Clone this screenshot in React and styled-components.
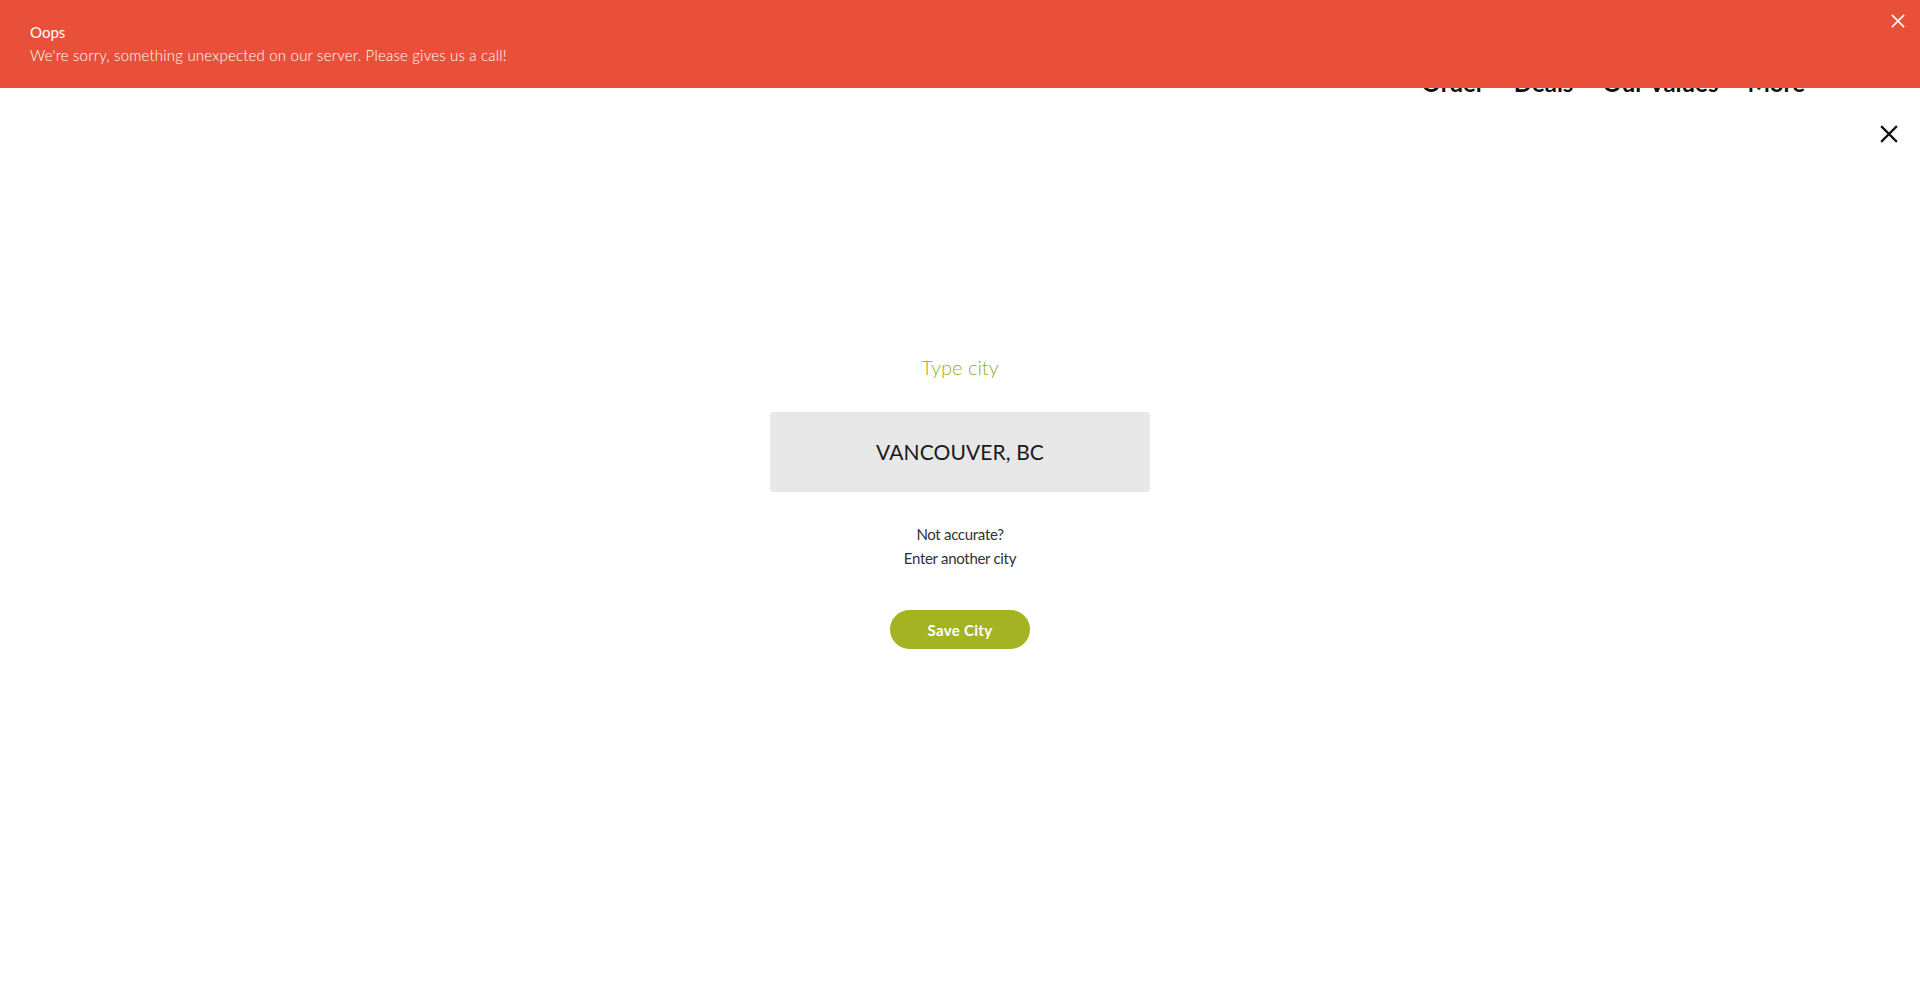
import React from "react";
import styled, { createGlobalStyle } from "styled-components";

const GlobalStyle = createGlobalStyle`
  html, body {
    margin: 0;
    padding: 0;
    background: #ffffff;
    font-family: Lato, "Open Sans", "Liberation Sans", sans-serif;
    color: #222;
  }
  * { box-sizing: border-box; }
`;

const Page = styled.div`
  position: relative;
  min-height: 100vh;
  background: #fff;
`;

const Banner = styled.div`
  position: fixed;
  top: 0;
  left: 0;
  right: 0;
  height: 88px;
  background: #e8503a;
  color: #fff;
  padding: 21px 30px 0;
  z-index: 10;
`;

const BannerTitle = styled.div`
  font-size: 15px;
  line-height: 22px;
  font-weight: 400;
`;

const BannerText = styled.div`
  font-size: 15px;
  line-height: 24px;
  font-weight: 300;
  letter-spacing: 0.2px;
`;

const BannerClose = styled.button`
  position: absolute;
  top: 12px;
  right: 13px;
  width: 18px;
  height: 18px;
  padding: 0;
  border: 0;
  background: transparent;
  display: flex;
  align-items: center;
  justify-content: center;
  cursor: pointer;
`;

const Header = styled.header`
  display: flex;
  flex-direction: column;
`;

const Nav = styled.nav`
  display: flex;
  justify-content: flex-end;
  gap: 29px;
  padding: 68px 115px 0 0;
`;

const NavItem = styled.a`
  font-size: 24px;
  line-height: 30px;
  font-weight: 700;
  color: #111;
  text-decoration: none;
`;

const CloseRow = styled.div`
  display: flex;
  justify-content: flex-end;
  padding-right: 19px;
  margin-top: 24px;
`;

const CloseButton = styled.button`
  width: 24px;
  height: 24px;
  padding: 0;
  border: 0;
  background: transparent;
  display: flex;
  align-items: center;
  justify-content: center;
  cursor: pointer;
`;

const Main = styled.main`
  display: flex;
  flex-direction: column;
  align-items: center;
  padding-top: 207px;
`;

const Title = styled.h2`
  margin: 0;
  font-size: 20px;
  line-height: 28px;
  font-weight: 300;
  color: #93b01a;
`;

const CityBox = styled.div`
  margin-top: 31px;
  width: 380px;
  height: 80px;
  background: #e7e7e7;
  border-radius: 4px;
  display: flex;
  align-items: center;
  justify-content: center;
  font-size: 21px;
  font-weight: 400;
  letter-spacing: 0.1px;
  color: #1a1a1a;
  padding-bottom: 2px;
`;

const Hint = styled.p`
  margin: 30px 0 0;
  text-align: center;
  font-size: 15px;
  line-height: 24px;
  color: #333;
  letter-spacing: -0.3px;
`;

const SaveButton = styled.button`
  margin-top: 40px;
  width: 140px;
  height: 39px;
  border: 0;
  border-radius: 20px;
  background: #a3b322;
  color: #fff;
  font-family: inherit;
  font-size: 15px;
  font-weight: 700;
  letter-spacing: 0.3px;
  cursor: pointer;
`;

const XIcon = ({ size, color, stroke }) => (
  <svg width={size} height={size} viewBox="0 0 16 16" fill="none">
    <path d="M1 1L15 15M15 1L1 15" stroke={color} strokeWidth={stroke} />
  </svg>
);

export default function App() {
  return (
    <Page>
      <GlobalStyle />
      <Banner>
        <BannerTitle>Oops</BannerTitle>
        <BannerText>We're sorry, something unexpected on our server. Please gives us a call!</BannerText>
        <BannerClose aria-label="Dismiss">
          <XIcon size={14} color="#fff" stroke={1.7} />
        </BannerClose>
      </Banner>
      <Header>
        <Nav>
          <NavItem href="#">Order</NavItem>
          <NavItem href="#">Deals</NavItem>
          <NavItem href="#">Our Values</NavItem>
          <NavItem href="#">More</NavItem>
        </Nav>
        <CloseRow>
          <CloseButton aria-label="Close">
            <XIcon size={18} color="#111" stroke={1.9} />
          </CloseButton>
        </CloseRow>
      </Header>
      <Main>
        <Title>Type city</Title>
        <CityBox>VANCOUVER, BC</CityBox>
        <Hint>
          Not accurate?
          <br />
          Enter another city
        </Hint>
        <SaveButton>Save City</SaveButton>
      </Main>
    </Page>
  );
}
